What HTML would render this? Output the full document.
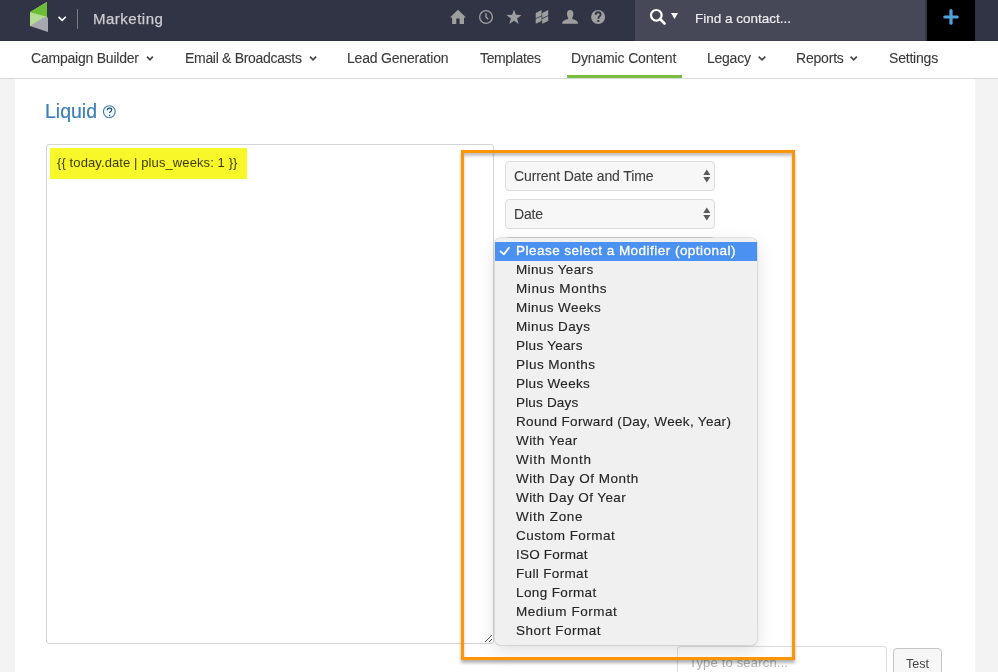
<!DOCTYPE html>
<html><head><meta charset="utf-8">
<style>
*{margin:0;padding:0;box-sizing:border-box}
html,body{width:998px;height:672px;overflow:hidden;background:#f3f3f3;font-family:"Liberation Sans",sans-serif}
.a{position:absolute}
.t{position:absolute;white-space:nowrap;line-height:1;will-change:transform}
#hdr{left:0;top:0;width:998px;height:41px;background:#303444}
#hdrb{left:0;top:40px;width:998px;height:1px;background:#2a2d3c}
#srchr{left:635px;top:40px;width:290px;height:1px;background:#3e404f}
#srch{left:635px;top:0;width:290px;height:40px;background:#474857}
#srchb{left:925px;top:0;width:2px;height:41px;background:#353747}
#plus{left:927px;top:0;width:48px;height:41px;background:#000}
#nav{left:0;top:41px;width:998px;height:37px;background:#fff}
#navb{left:0;top:78px;width:998px;height:1px;background:#d9d9d9}
#panel{left:15px;top:79px;width:960px;height:593px;background:#fff}
.nv{font-size:14px;color:#3a3a3a;top:51px;-webkit-text-stroke-width:0.1px}
.chev{position:absolute}
#ta{left:46px;top:144px;width:448px;height:500px;border:1px solid #d4d4d4;border-radius:3px;background:#fff}
#yel{left:50px;top:148px;width:197px;height:31px;background:#f8f72a}
.sel{position:absolute;left:505px;width:210px;height:30px;border:1px solid #dcdcdc;border-radius:4px;background:#f7f7f7}
#menu{left:495px;top:237.5px;width:262px;height:407.5px;background:#f0f0f0;border-radius:5px;box-shadow:0 0 0 0.5px rgba(0,0,0,0.2),0 6px 18px rgba(0,0,0,0.13)}
#hl{left:495px;top:242px;width:262px;height:19px;background:#4b91f1}
.mi{position:absolute;left:515.7px;font-size:13.5px;color:#262626;letter-spacing:0.4px;line-height:19px;height:19px;white-space:nowrap;will-change:transform;transform:translateY(-0.7px);-webkit-text-stroke-width:0.15px}
#orange{left:461px;top:150px;width:334px;height:510px;border:3px solid #ff9407;box-shadow:0 3px 3px rgba(0,0,0,0.3), inset 0 3px 3px rgba(0,0,0,0.24)}
#inp{left:677px;top:646px;width:210px;height:40px;border:1px solid #ddd;border-radius:3px;background:#fff}
#btn{left:893px;top:648px;width:49px;height:40px;border:1px solid #c4c4c4;border-radius:4px;background:#f7f7f7}
</style></head><body>
<div class="a" id="hdr"></div>
<div class="a" id="srch"></div>
<div class="a" id="srchb"></div>
<div class="a" id="hdrb"></div>
<div class="a" id="srchr"></div>
<div class="a" id="plus"></div>
<!-- logo -->
<svg class="a" style="left:0;top:0" width="100" height="40">
  <polygon points="47,2 30,12.2 30,26 48,32 48,18 47,17" fill="#a7a8ad"/>
  <polygon points="47,2 30,12.2 30,26 43.5,17.4 47,17" fill="#b4dc94"/>
  <polygon points="47,2 30,12.2 47,16.8" fill="#6cbd33"/>
  <polyline points="58.5,16.8 62.2,20.3 65.8,16.8" fill="none" stroke="#fff" stroke-width="1.6"/>
  <rect x="77" y="9" width="1" height="20" fill="#7b7c86"/>
</svg>
<div class="t" style="left:92.8px;top:10.8px;font-size:15px;color:#cdcdd0;letter-spacing:0.5px;-webkit-text-stroke-width:0.25px">Marketing</div>
<!-- header icons -->
<svg class="a" style="left:440px;top:0" width="170" height="40" fill="#9e9e9e">
  <path d="M9.9,17.6 L18,9.8 L26.1,17.6 L24,17.6 L24,24 L19.6,24 L19.6,18.6 L16.3,18.6 L16.3,24 L12.1,24 L12.1,17.6 Z"/>
  <circle cx="46" cy="16.95" r="6.35" fill="none" stroke="#9e9e9e" stroke-width="1.35"/>
  <polyline points="46,13.2 46,16.9 48.2,19.3" fill="none" stroke="#9e9e9e" stroke-width="1.45"/>
  <path d="M74,9.8 L75.9,14.8 L81.6,15 L77.1,18.4 L78.7,24 L74,20.7 L69.3,24 L70.9,18.4 L66.4,15 L72.1,14.8 Z"/>
  <path d="M95.7,13 L101.6,10.1 L101.6,15.4 L95.7,18.2 Z M95.7,19.1 L101.6,16.2 L101.6,20.9 L95.7,23.8 Z M102.2,12.9 L108.2,9.9 L108.2,15.2 L102.2,18.1 Z M102.2,18.9 L108.2,16 L108.2,20.9 L102.2,23.8 Z"/>
  <path d="M130.2,9.9 C132.1,9.9 133.4,11.3 133.4,13.6 C133.4,15.6 132.8,17 132.3,17.6 L132.3,19 C136,19.8 138,21 138.2,23.8 L122,23.8 C122.2,21 124.3,19.8 128.1,19 L128.1,17.6 C127.6,17 127,15.6 127,13.6 C127,11.3 128.3,9.9 130.2,9.9 Z"/>
  <circle cx="158.1" cy="17" r="7"/>
  <path d="M155.7,14.7 C155.7,13.1 156.7,12.3 158.1,12.3 C159.6,12.3 160.6,13.2 160.6,14.5 C160.6,16.3 158.3,16.5 158.3,18.7" fill="none" stroke="#303444" stroke-width="1.9"/>
  <rect x="157.3" y="20" width="2" height="1.9" fill="#303444"/>
</svg>
<!-- search -->
<svg class="a" style="left:640px;top:0" width="50" height="40">
  <circle cx="16.3" cy="15.3" r="5.3" fill="none" stroke="#fff" stroke-width="2.2"/>
  <line x1="20" y1="19" x2="24.5" y2="23.5" stroke="#fff" stroke-width="2.6" stroke-linecap="round"/>
  <polygon points="31,13 38,13 34.5,19" fill="#fff"/>
</svg>
<div class="t" style="left:695px;top:11.5px;font-size:13.5px;color:#ececee;letter-spacing:0px;-webkit-text-stroke-width:0.2px">Find a contact...</div>
<svg class="a" style="left:927px;top:0" width="48" height="40">
  <line x1="17.8" y1="17" x2="30.2" y2="17" stroke="#4ea3dc" stroke-width="3.2" stroke-linecap="round"/>
  <line x1="24" y1="10.6" x2="24" y2="23.2" stroke="#4ea3dc" stroke-width="3.2" stroke-linecap="round"/>
</svg>

<!-- nav -->
<div class="a" id="nav"></div>
<div class="a" id="navb"></div>
<div class="t nv" style="left:30.50px;letter-spacing:-0.217px">Campaign Builder</div>
<div class="t nv" style="left:184.50px;letter-spacing:-0.310px">Email &amp; Broadcasts</div>
<div class="t nv" style="left:346.60px;letter-spacing:-0.200px">Lead Generation</div>
<div class="t nv" style="left:479.70px;letter-spacing:-0.360px">Templates</div>
<div class="t nv" style="left:571.30px;letter-spacing:-0.150px">Dynamic Content</div>
<div class="t nv" style="left:706.80px;letter-spacing:-0.250px">Legacy</div>
<div class="t nv" style="left:795.90px;letter-spacing:-0.200px">Reports</div>
<div class="t nv" style="left:888.50px;letter-spacing:-0.200px">Settings</div>
<svg class="a" style="left:0;top:40px" width="998" height="40">
  <g fill="none" stroke="#444" stroke-width="1.6">
    <polyline points="147.0,16.6 149.90,19.9 152.8,16.6"/>
    <polyline points="310.0,16.6 313.05,19.9 316.1,16.6"/>
    <polyline points="758.7,16.6 762.00,19.9 765.3,16.6"/>
    <polyline points="850.6,16.6 853.70,19.9 856.8,16.6"/>
  </g>
  <rect x="567" y="35" width="115" height="3" fill="#79bd3e"/>
</svg>

<!-- panel -->
<div class="a" id="panel"></div>
<div class="t" style="left:44.7px;top:101.7px;font-size:19.5px;color:#3a7fb8;letter-spacing:0px;-webkit-text-stroke:0.2px #3a7fb8">Liquid</div>
<svg class="a" style="left:100px;top:102px" width="20" height="20">
  <circle cx="9.3" cy="9.6" r="5.9" fill="#f1f8fc" stroke="#3a7cab" stroke-width="1.1"/>
  <path d="M7.3,8.2 C7.3,6.8 8.3,6.1 9.5,6.1 C10.8,6.1 11.7,6.8 11.7,7.9 C11.7,9.4 9.6,9.6 9.6,10.9" fill="none" stroke="#1a4a66" stroke-width="1.1"/>
  <circle cx="9.6" cy="13.4" r="0.72" fill="#1a4a66"/>
</svg>

<div class="a" id="ta"></div>
<div class="a" id="yel"></div>
<div class="t" style="left:56.5px;top:156px;font-size:13px;color:#3f3d05;letter-spacing:0.1px">{{ today.date | plus_weeks: 1 }}</div>
<svg class="a" style="left:480px;top:630px" width="14" height="14">
  <line x1="5" y1="12" x2="12" y2="5" stroke="#555" stroke-width="1"/>
  <line x1="9" y1="12" x2="12" y2="9" stroke="#555" stroke-width="1"/>
</svg>

<div class="sel" style="top:161px"></div>
<div class="t" style="left:514px;top:168.5px;font-size:14px;color:#3d3d3d;letter-spacing:-0.1px;-webkit-text-stroke-width:0.1px">Current Date and Time</div>
<div class="sel" style="top:199px"></div>
<div class="t" style="left:513.5px;top:206.5px;font-size:14px;color:#3d3d3d;letter-spacing:-0.2px;-webkit-text-stroke-width:0.1px">Date</div>
<svg class="a" style="left:700px;top:165px" width="14" height="60" fill="#5a5a5a">
  <polygon points="3.3,10 6.8,4.5 10.3,10"/><polygon points="3.3,12 10.3,12 6.8,17.5"/>
  <polygon points="3.3,48 6.8,42.5 10.3,48"/><polygon points="3.3,50 10.3,50 6.8,55.5"/>
</svg>
<div class="sel" style="top:237px"></div>

<div class="a" id="inp"></div>
<div class="t" style="left:689px;top:656px;font-size:13px;color:#b5b5b5;letter-spacing:0.18px">Type to search...</div>
<div class="a" id="btn"></div>
<div class="t" style="left:905.6px;top:657.5px;font-size:12.5px;color:#444;letter-spacing:0px">Test</div>

<!-- menu -->
<div class="a" id="menu"></div>
<div class="a" id="hl"></div>
<svg class="a" style="left:495px;top:242px" width="20" height="19">
  <polyline points="5.6,9.4 8.8,12.4 14,5.8" fill="none" stroke="#fff" stroke-width="1.75" stroke-linecap="round" stroke-linejoin="round"/>
</svg>
<div class="mi" style="top:242px;color:#fff;-webkit-text-stroke-width:0.3px;letter-spacing:0.474px">Please select a Modifier (optional)</div>
<div class="mi" style="top:261px;letter-spacing:0.360px">Minus Years</div>
<div class="mi" style="top:280px;letter-spacing:0.599px">Minus Months</div>
<div class="mi" style="top:299px;letter-spacing:0.390px">Minus Weeks</div>
<div class="mi" style="top:318px;letter-spacing:0.379px">Minus Days</div>
<div class="mi" style="top:337px;letter-spacing:0.289px">Plus Years</div>
<div class="mi" style="top:356px;letter-spacing:0.460px">Plus Months</div>
<div class="mi" style="top:375px;letter-spacing:0.301px">Plus Weeks</div>
<div class="mi" style="top:394px;letter-spacing:0.175px">Plus Days</div>
<div class="mi" style="top:413px;letter-spacing:0.327px">Round Forward (Day, Week, Year)</div>
<div class="mi" style="top:432px;letter-spacing:0.439px">With Year</div>
<div class="mi" style="top:451px;letter-spacing:0.755px">With Month</div>
<div class="mi" style="top:470px;letter-spacing:0.519px">With Day Of Month</div>
<div class="mi" style="top:489px;letter-spacing:0.414px">With Day Of Year</div>
<div class="mi" style="top:508px;letter-spacing:0.611px">With Zone</div>
<div class="mi" style="top:527px;letter-spacing:0.483px">Custom Format</div>
<div class="mi" style="top:546px;letter-spacing:0.199px">ISO Format</div>
<div class="mi" style="top:565px;letter-spacing:0.340px">Full Format</div>
<div class="mi" style="top:584px;letter-spacing:0.370px">Long Format</div>
<div class="mi" style="top:603px;letter-spacing:0.517px">Medium Format</div>
<div class="mi" style="top:622px;letter-spacing:0.528px">Short Format</div>

<div class="a" id="orange"></div>
</body></html>
